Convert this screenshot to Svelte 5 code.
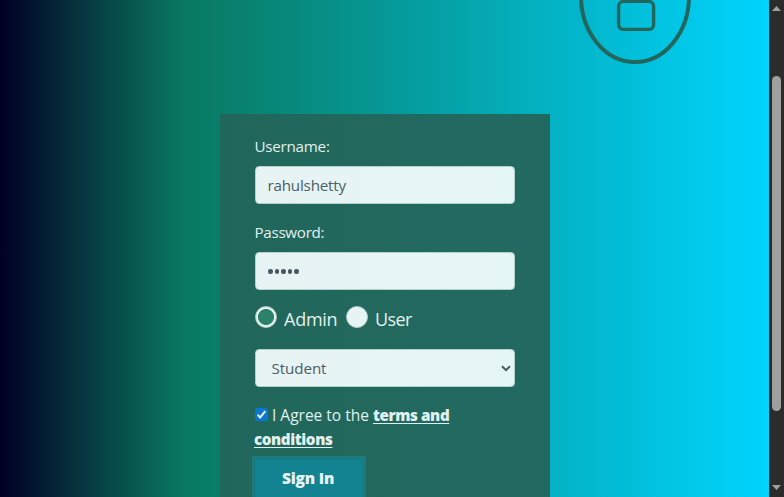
<script>
  let username = $state('rahulshetty');
  let password = $state('learn');
  let role = $state('admin');
  let agree = $state(true);
</script>

<div class="window">
  <main class="page">
    <svg class="phone" width="112" height="64" viewBox="0 0 112 64" fill="none" stroke="#22665c">
      <ellipse cx="56" cy="-4" rx="54" ry="66" stroke-width="4" />
      <rect x="39.6" y="1.4" width="35" height="28" rx="5" stroke-width="3.4" />
    </svg>
    <form class="panel">
      <label for="username"><span>Username:</span></label>
      <input id="username" class="control" type="text" bind:value={username} />
      <label class="second" for="password"><span>Password:</span></label>
      <div class="control dots" id="password">
        {#each password as _}<i></i>{/each}
      </div>
      <div class="roles">
        <button type="button" class="radio" class:on={role === 'admin'} aria-label="Admin" onclick={() => (role = 'admin')}></button>
        <span class="admin">Admin</span>
        <button type="button" class="radio" class:on={role === 'user'} aria-label="User" onclick={() => (role = 'user')}></button>
        <span class="user">User</span>
      </div>
      <div class="control select">
        <span>Student</span>
        <svg width="10" height="7" viewBox="0 0 10 7" fill="none" stroke="#465860" stroke-width="2"><path d="M1 1.2 5 5.2 9 1.2" /></svg>
      </div>
      <div class="terms">
        <button type="button" class="check" aria-label="Agree" onclick={() => (agree = !agree)}>
          {#if agree}<svg width="13" height="13" viewBox="0 0 13 13" fill="none" stroke="#e9f5f5" stroke-width="2"><path d="M2.6 6.8 5.2 9.4 10.3 3.2" /></svg>{/if}
        </button><span class="agree">I Agree to the</span><b class="link">terms and</b><br /><b class="link two">conditions</b>
      </div>
      <button type="button" class="sign"><span>Sign In</span></button>
    </form>
  </main>
  <aside class="scroll">
    <svg width="15" height="497" viewBox="0 0 15 497" fill="#a0a0a0">
      <path d="M3 11 7.5 6 12 11ZM3 485 7.5 490 12 485Z" />
      <rect x="3" y="76" width="9" height="335" rx="4.5" />
    </svg>
  </aside>
</div>

<style>
  .window {
    display: flex;
    width: 784px;
    height: 497px;
    overflow: hidden;
    font-family: 'Open Sans', 'Noto Sans', sans-serif;
    font-size: 15.5px;
    color: #e2f0ef;
  }
  .page {
    width: 769px;
    height: 497px;
    background: linear-gradient(90deg, #020024 0%, #097960 24%, #00d4ff 100%);
  }
  .phone { display: block; margin-left: 579px; }
  .panel {
    box-sizing: border-box;
    width: 330px;
    height: 440px;
    margin: 50px 0 0 220px;
    padding: 20px 35px 0;
    background: linear-gradient(90deg, #21665a, #226a61);
  }
  label { display: block; height: 24px; line-height: 25px; margin: 0 0 8px -0.5px; font-size: 15.2px; letter-spacing: -0.25px; }
  .second { margin-top: 16px; letter-spacing: -0.3px; }
  .control {
    display: flex;
    align-items: center;
    box-sizing: border-box;
    width: 260px;
    height: 38px;
    padding: 0 11.5px;
    border: 1px solid #b4cfcd;
    border-radius: 4px;
    background: linear-gradient(90deg, #e8f3f3, #e5f6f7);
    color: #4b6068;
    font-family: inherit;
    font-size: 15.2px;
    letter-spacing: -0.2px;
    outline: none;
  }
  .dots { gap: 2px; padding: 1px 12px 0; }
  .dots i { width: 4.5px; height: 4.5px; border-radius: 50%; background: #465860; }
  .roles { display: flex; height: 26px; margin-top: 16px; font-size: 18px; line-height: 27px; letter-spacing: -0.25px; }
  .radio {
    box-sizing: border-box;
    width: 22px;
    height: 22px;
    padding: 0;
    border: 1px solid #b8cbc9;
    border-radius: 50%;
    background: #e7f4f4;
  }
  .radio.on { background: radial-gradient(circle, #2c816b 7.6px, #e7f4f4 8.4px); }
  .admin { width: 54px; margin: 0 0 0 7px; padding-right: 8px; }
  .user { margin-left: 7px; letter-spacing: -0.6px; }
  .select { justify-content: space-between; margin-top: 17px; padding: 0 3px 0 15.5px; letter-spacing: -0.1px; }
  .terms { margin-top: 16px; line-height: 24px; white-space: nowrap; }
  .check {
    width: 13px;
    height: 13px;
    padding: 0;
    border: 0;
    border-radius: 2px;
    background: #0877d1;
    vertical-align: 0;
  }
  .check svg { display: block; }
  .agree { margin: 0 4px; }
  .link { font-weight: 800; font-size: 15.2px; text-decoration: underline; text-underline-offset: 2px; letter-spacing: -0.4px; }
  .two { margin-left: -1px; }
  .sign {
    display: block;
    box-sizing: border-box;
    width: 108px;
    height: 50px;
    margin: 8px 0 0;
    padding: 0 2px 12px 0;
    border: 1px solid #147b87;
    background: #148391;
    box-shadow: 0 0 0 3px #1b7b7c;
    color: #e7f6f5;
    font: 800 15.5px/24px 'Open Sans', 'Noto Sans', sans-serif;
    letter-spacing: -0.2px;
  }
  .scroll { width: 15px; background: #2c2c2c; }
  .scroll svg { display: block; }
</style>
